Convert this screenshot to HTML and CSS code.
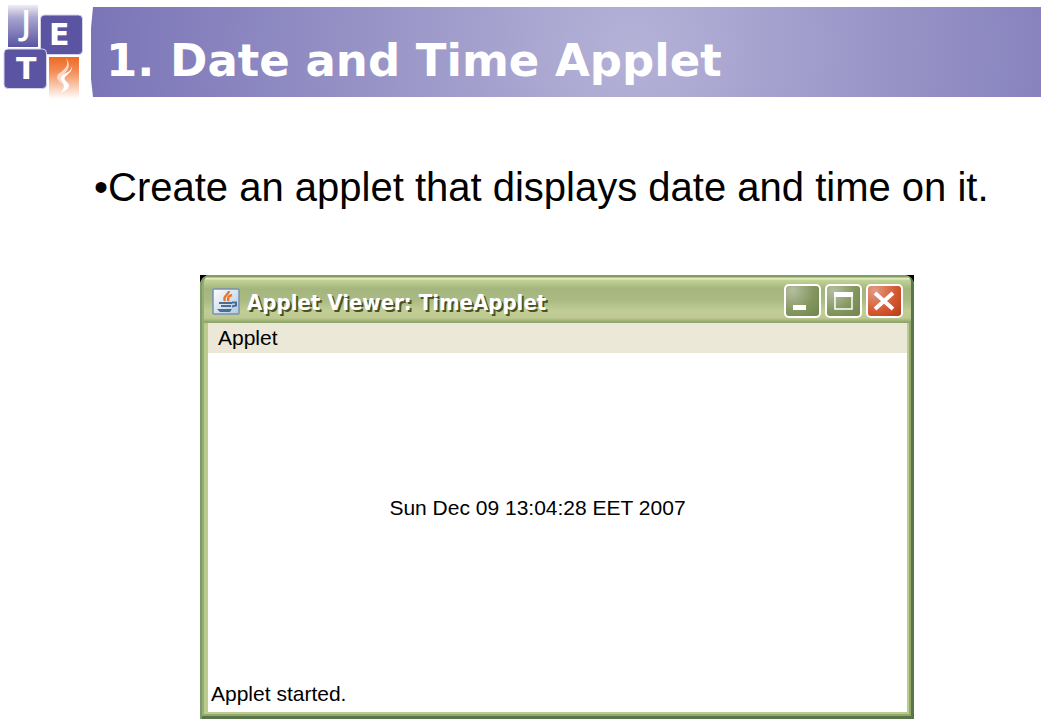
FILE: index.html
```html
<!DOCTYPE html>
<html lang="en">
<head>
<meta charset="utf-8">
<title>Date and Time Applet</title>
<link rel="stylesheet" href="styles.css">
</head>
<body>
<header class="header">
  <svg class="logo" viewBox="0 0 88 97" role="img" aria-label="JETS">
    <defs>
      <linearGradient id="fade-in" x1="0" y1="0" x2="0" y2="1">
        <stop offset="0" stop-color="#eeedf6"/>
        <stop offset=".3" stop-color="#a9a6d0"/>
        <stop offset="1" stop-color="#5a54a3"/>
      </linearGradient>
      <linearGradient id="fade-out" x1="0" y1="0" x2="0" y2="1">
        <stop offset="0" stop-color="#ee6a24"/>
        <stop offset=".35" stop-color="#f38d57"/>
        <stop offset="1" stop-color="#fff"/>
      </linearGradient>
    </defs>
    <rect x="8" y="5" width="30" height="42" fill="url(#fade-in)"/>
    <rect x="49" y="57" width="30" height="42" fill="url(#fade-out)"/>
    <rect x="40.500" y="15" width="42" height="39.500" rx="4" fill="#5a54a3" stroke="#d5d3e8"/>
    <rect x="4" y="49" width="42.500" height="39.500" rx="4" fill="#5a54a3" stroke="#d5d3e8"/>
    <text class="logo-letter logo-letter-thin" x="21" y="35">J</text>
    <text class="logo-letter" x="49" y="45">E</text>
    <text class="logo-letter" x="16" y="79">T</text>
    <path d="M66 58C69 65 66 68 61 72C54 76 57 80 63 85C60 79 61 76 65 73C70 68 70 63 66 58Z" fill="#fbd6c3"/>
    <path d="M72 65C73 71 69 73 66 76C63 79 65 80 68 83C71 87 67 90 61 93C64 88 65 86 62 82C59 77 62 75 66 73C70 71 72 69 72 65Z" fill="#fff"/>
  </svg>
  <div class="banner"><h1 class="title">1. Date and Time Applet</h1></div>
</header>
<main class="content">
  <ul class="points"><li class="point">Create an applet that displays date and time on it.</li></ul>
  <div class="stage">
    <section class="window" aria-label="Applet Viewer: TimeApplet">
      <div class="frame">
        <div class="titlebar">
          <svg class="app-icon" viewBox="0 0 28 27" aria-hidden="true">
            <defs><linearGradient id="tile" x1="0" y1="0" x2="1" y2="1"><stop offset="0" stop-color="#fff"/><stop offset="1" stop-color="#b4c8dc"/></linearGradient></defs>
            <rect x="1" y="1" width="26" height="25" rx="1" fill="url(#tile)" stroke="#7791b2" stroke-width="1.5"/>
            <path d="M17 3C17 7 10 8 13 13M20 7C14 9 17 10 16 13" fill="none" stroke="#ed7528" stroke-width="2.4"/>
            <path d="M7 15H20M9 18H19M20 14.500H24V17.500L20 18.500" fill="none" stroke="#466f98" stroke-width="2"/>
            <path d="M5 21H20L18 24H8Z" fill="#466f98"/>
          </svg>
          <h2 class="window-title">Applet Viewer: TimeApplet</h2>
          <div class="controls">
            <button class="control" type="button" aria-label="Minimize"><svg class="glyph" viewBox="0 0 33 30"><rect x="7" y="19" width="13" height="5" fill="#fff"/></svg></button>
            <button class="control" type="button" aria-label="Maximize"><svg class="glyph" viewBox="0 0 33 30"><path d="M8 8H25V23H8Z" fill="none" stroke="#fff" stroke-width="1.5"/><path d="M7 6H26V11H7Z" fill="#fff"/></svg></button>
            <button class="control control-close" type="button" aria-label="Close"><svg class="glyph" viewBox="0 0 33 30"><path d="M7 7L25 23M25 7L7 23" stroke="#fff" stroke-width="4"/></svg></button>
          </div>
        </div>
        <nav class="menubar"><button class="menu" type="button">Applet</button></nav>
        <div class="canvas"><time datetime="2007-12-09T13:04:28">Sun Dec 09 13:04:28 EET 2007</time></div>
        <footer class="status">Applet started.</footer>
      </div>
    </section>
  </div>
</main>
</body>
</html>
```
FILE: styles.css
```css
* { box-sizing: border-box; }
body {
  margin: 0;
  background: #fff;
  color: #000;
  font-family: "Liberation Sans", Arial, sans-serif;
}
.header {
  display: flex;
  gap: 3px;
  height: 104px;
}
.logo {
  flex: none;
  width: 88px;
  height: 97px;
  overflow: visible;
}
.logo-letter {
  fill: #fff;
  font: bold 30px "DejaVu Sans", Verdana, sans-serif;
}
.logo-letter-thin { font: 600 34px "Open Sans", sans-serif; }
.banner {
  flex: 1;
  height: 90px;
  margin-top: 7px;
  padding: 27px 15px 0;
  background: radial-gradient(circle 560px at 57% 45%, #b5b2d8 0, #9995c7 44%, #7973b6 100%);
  clip-path: polygon(2px 0, 100% 0, 100% 100%, 2px 100%, 0 72px, 0 21px);
}
.title {
  margin: 0;
  color: #fff;
  font: bold 45px/54px "DejaVu Sans", Verdana, sans-serif;
  white-space: nowrap;
}
.points {
  margin: 0;
  padding: 59px 0 0 94px;
  list-style: none;
}
.point {
  font-size: 40px;
  line-height: 48px;
}
.point::before { content: "•"; }
.stage { padding: 64px 127px 9px 200px; }
.window { background: #000; border-radius: 0 0 2px 2px; }
.frame {
  padding: 0 7px 7px 8px;
  border-radius: 10px 10px 0 0;
  background: #bccb8e;
  box-shadow: inset 2px 0 #7f9b66, inset -3px -3px #5b754b, inset 4px 0 #94ae77, inset -5px -5px #94a86c;
}
.titlebar {
  display: flex;
  align-items: center;
  height: 48px;
  margin: 0 -4px;
  padding: 4px 8px 0;
  border-radius: 8px 8px 0 0;
  background: linear-gradient(#829a63 0 2px, #e3edbc 3px 4px, #c3d396 5px, #a4b57e 14px, #a9ba82 25px, #c2cd96 36px, #bdc990 43px, #8fa66a 47px);
}
.app-icon {
  flex: none;
  width: 28px;
  height: 27px;
}
.window-title {
  flex: 1;
  margin: 0;
  padding: 4px 0 0 7px;
  color: #fff;
  font: bold 22px/28px "DejaVu Sans Condensed", "DejaVu Sans", sans-serif;
  text-shadow: 2px 2px #4b5320;
  white-space: nowrap;
}
.controls { display: flex; gap: 4px; }
.control {
  width: 37px;
  height: 34px;
  padding: 0;
  border: 2px solid #fff;
  border-radius: 5px;
  background: radial-gradient(circle at 20% 15%, #b4bea0, #82955c 60%, #71844b);
}
.control-close { background: radial-gradient(circle at 20% 15%, #e29b82, #d3562f 60%, #b63d18); }
.glyph {
  display: block;
  width: 100%;
  height: 100%;
}
.menubar {
  height: 30px;
  background: #ebe8d8;
}
.menu {
  padding: 0 10px;
  border: 0;
  background: none;
  color: #000;
  font: 21px/30px "Liberation Sans", Arial, sans-serif;
}
.canvas {
  display: flex;
  justify-content: center;
  height: 324px;
  padding: 143px 40px 0 0;
  background: #fff;
  font-size: 21px;
  line-height: 24px;
}
.status {
  padding: 5px 3px 6px;
  background: #fff;
  font-size: 21px;
  line-height: 24px;
}
```
